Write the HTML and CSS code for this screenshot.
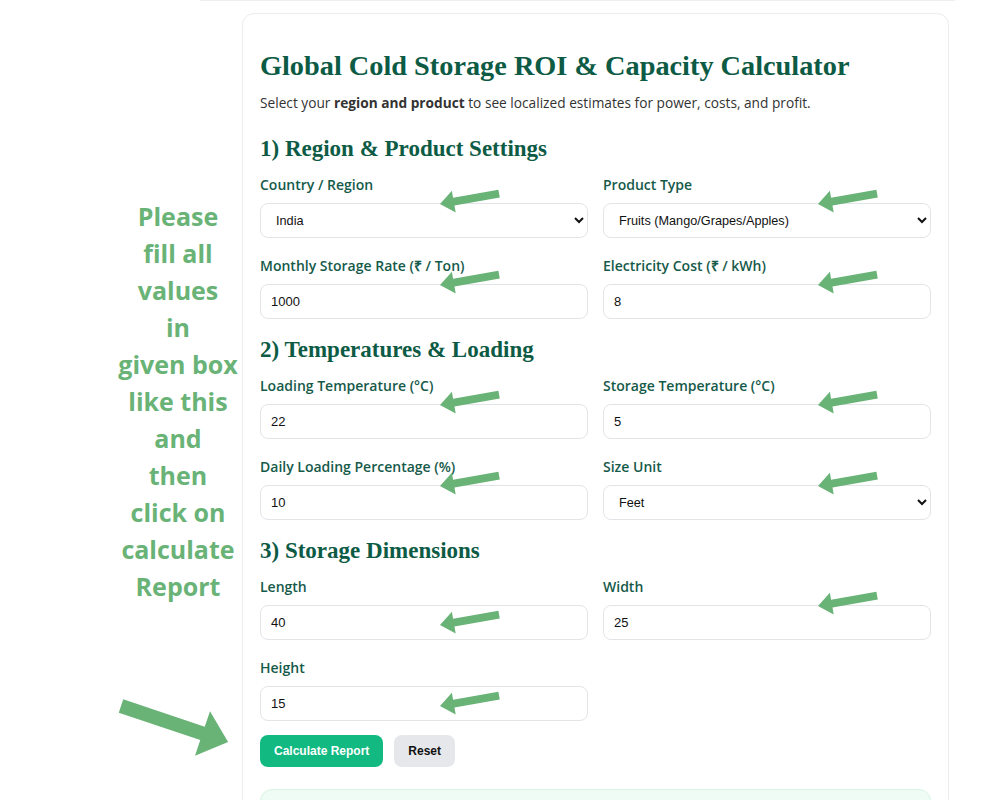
FILE: index.html
```html
<!DOCTYPE html>
<html lang="en">
<head>
<meta charset="utf-8"/>
<meta content="width=device-width, initial-scale=1.0" name="viewport"/>
<title>Global Cold Storage ROI &amp; Capacity Calculator</title>
<link rel="stylesheet" href="styles.css">
</head>
<body>
<div class="rule"></div>
<main class="card">
  <h1>Global Cold Storage ROI &amp; Capacity Calculator</h1>
  <p class="lead">Select your <b>region and product</b> to see localized estimates for power, costs, and profit.</p>

  <h2>1) Region &amp; Product Settings</h2>
  <div class="grid">
    <div class="field">
      <label>Country / Region</label>
      <select><option>India</option><option>United States</option><option>Kenya</option></select>
      <svg class="arrow" viewBox="0 0 64 28"><polygon transform="rotate(-10 2 16)" points="2,16 16,5 16,12 62,12 62,20 16,20 16,27"/></svg>
    </div>
    <div class="field">
      <label>Product Type</label>
      <select><option>Fruits (Mango/Grapes/Apples)</option><option>Vegetables</option><option>Dairy</option></select>
      <svg class="arrow" viewBox="0 0 64 28"><polygon transform="rotate(-10 2 16)" points="2,16 16,5 16,12 62,12 62,20 16,20 16,27"/></svg>
    </div>
    <div class="field">
      <label>Monthly Storage Rate (₹ / Ton)</label>
      <input type="number" value="1000"/>
      <svg class="arrow" viewBox="0 0 64 28"><polygon transform="rotate(-10 2 16)" points="2,16 16,5 16,12 62,12 62,20 16,20 16,27"/></svg>
    </div>
    <div class="field">
      <label>Electricity Cost (₹ / kWh)</label>
      <input type="number" value="8"/>
      <svg class="arrow" viewBox="0 0 64 28"><polygon transform="rotate(-10 2 16)" points="2,16 16,5 16,12 62,12 62,20 16,20 16,27"/></svg>
    </div>
  </div>

  <h2>2) Temperatures &amp; Loading</h2>
  <div class="grid">
    <div class="field">
      <label>Loading Temperature (°C)</label>
      <input type="number" value="22"/>
      <svg class="arrow" viewBox="0 0 64 28"><polygon transform="rotate(-10 2 16)" points="2,16 16,5 16,12 62,12 62,20 16,20 16,27"/></svg>
    </div>
    <div class="field">
      <label>Storage Temperature (°C)</label>
      <input type="number" value="5"/>
      <svg class="arrow" viewBox="0 0 64 28"><polygon transform="rotate(-10 2 16)" points="2,16 16,5 16,12 62,12 62,20 16,20 16,27"/></svg>
    </div>
    <div class="field">
      <label>Daily Loading Percentage (%)</label>
      <input type="number" value="10"/>
      <svg class="arrow" viewBox="0 0 64 28"><polygon transform="rotate(-10 2 16)" points="2,16 16,5 16,12 62,12 62,20 16,20 16,27"/></svg>
    </div>
    <div class="field">
      <label>Size Unit</label>
      <select><option>Feet</option><option>Meters</option></select>
      <svg class="arrow" viewBox="0 0 64 28"><polygon transform="rotate(-10 2 16)" points="2,16 16,5 16,12 62,12 62,20 16,20 16,27"/></svg>
    </div>
  </div>

  <h2>3) Storage Dimensions</h2>
  <div class="grid">
    <div class="field">
      <label>Length</label>
      <input type="number" value="40"/>
      <svg class="arrow low" viewBox="0 0 64 28"><polygon transform="rotate(-10 2 16)" points="2,16 16,5 16,12 62,12 62,20 16,20 16,27"/></svg>
    </div>
    <div class="field">
      <label>Width</label>
      <input type="number" value="25"/>
      <svg class="arrow" viewBox="0 0 64 28"><polygon transform="rotate(-10 2 16)" points="2,16 16,5 16,12 62,12 62,20 16,20 16,27"/></svg>
    </div>
    <div class="field">
      <label>Height</label>
      <input type="number" value="15"/>
      <svg class="arrow low" viewBox="0 0 64 28"><polygon transform="rotate(-10 2 16)" points="2,16 16,5 16,12 62,12 62,20 16,20 16,27"/></svg>
    </div>
  </div>

  <div class="actions">
    <button class="btn primary">Calculate Report</button>
    <button class="btn">Reset</button>
  </div>

  <div class="result"></div>
</main>

<!-- annotation drawn over the screenshot -->
<div class="note">Please<br>fill all<br>values<br>in<br>given box<br>like this<br>and<br>then<br>click on<br>calculate<br>Report</div>
<svg class="big-arrow" viewBox="0 0 130 80"><polygon transform="translate(8 12) rotate(18.6)" points="0,-7 86,-7 86,-23.5 113,0 86,23.5 86,7 0,7"/></svg>
</body>
</html>
```

FILE: styles.css
```css
html {
  overflow: hidden;
}
body {
  margin: 0;
  background: white;
  font-family: "Open Sans", sans-serif;
  color: #333;
}
.rule {
  margin-left: 200px;
  width: 755px;
  border-top: 1px solid #eeeeee;
}
.card {
  box-sizing: border-box;
  width: 707px;
  margin: 12px 0 0 242px;
  padding: 34px 17px 40px;
  border: 1px solid #ececec;
  border-radius: 12px;
  background: white;
}
h1 {
  margin: 0;
  font-family: "Liberation Serif", serif;
  font-size: 28.3px;
  line-height: 36px;
  color: #0d5b45;
}
.lead {
  margin: 9px 0 0;
  font-size: 13.7px;
  line-height: 20px;
}
h2 {
  margin: 17px 0 13px;
  font-family: "Liberation Serif", serif;
  font-size: 23px;
  line-height: 28px;
  color: #0d5b45;
}
.lead + h2 {
  margin-top: 22px;
}
.grid {
  display: grid;
  grid-template-columns: 1fr 1fr;
  column-gap: 15px;
  row-gap: 19px;
}
.field {
  position: relative;
  display: flex;
  flex-direction: column;
  gap: 9px;
}
label {
  font-size: 14px;
  line-height: 18px;
  font-weight: 600;
  color: #165a4a;
}
input,
select {
  box-sizing: border-box;
  height: 35px;
  padding: 0 10px;
  border: 1px solid #e2e4e8;
  border-radius: 8px;
  background: white;
  font-family: "Liberation Sans", Arial, sans-serif;
  font-size: 13px;
  color: #111;
}
select {
  padding-left: 11px;
  font-size: 12.7px;
}
.actions {
  display: flex;
  gap: 11px;
  margin-top: 14px;
}
.btn {
  height: 32px;
  padding: 0 14px;
  border: none;
  border-radius: 8px;
  background: #e5e7eb;
  font-family: "Liberation Sans", Arial, sans-serif;
  font-size: 12px;
  font-weight: bold;
  color: #111;
}
.btn.primary {
  background: #12b981;
  color: white;
}
.result {
  height: 60px;
  margin-top: 22px;
  border: 1px solid #d6f5e5;
  border-radius: 12px;
  background: #effcf5;
}

/* annotation layer */
.arrow {
  position: absolute;
  left: 178px;
  top: 12px;
  width: 64px;
  height: 28px;
  fill: #69b377;
}
.field:nth-child(even) .arrow {
  left: 213px;
}
.arrow.low {
  top: 31px;
}
.note {
  position: absolute;
  left: 108px;
  top: 198px;
  width: 140px;
  text-align: center;
  font-family: "Open Sans", sans-serif;
  font-weight: 700;
  font-size: 25px;
  line-height: 37px;
  color: #69b377;
}
.big-arrow {
  position: absolute;
  left: 113px;
  top: 694px;
  width: 130px;
  height: 80px;
  fill: #69b377;
}
```
